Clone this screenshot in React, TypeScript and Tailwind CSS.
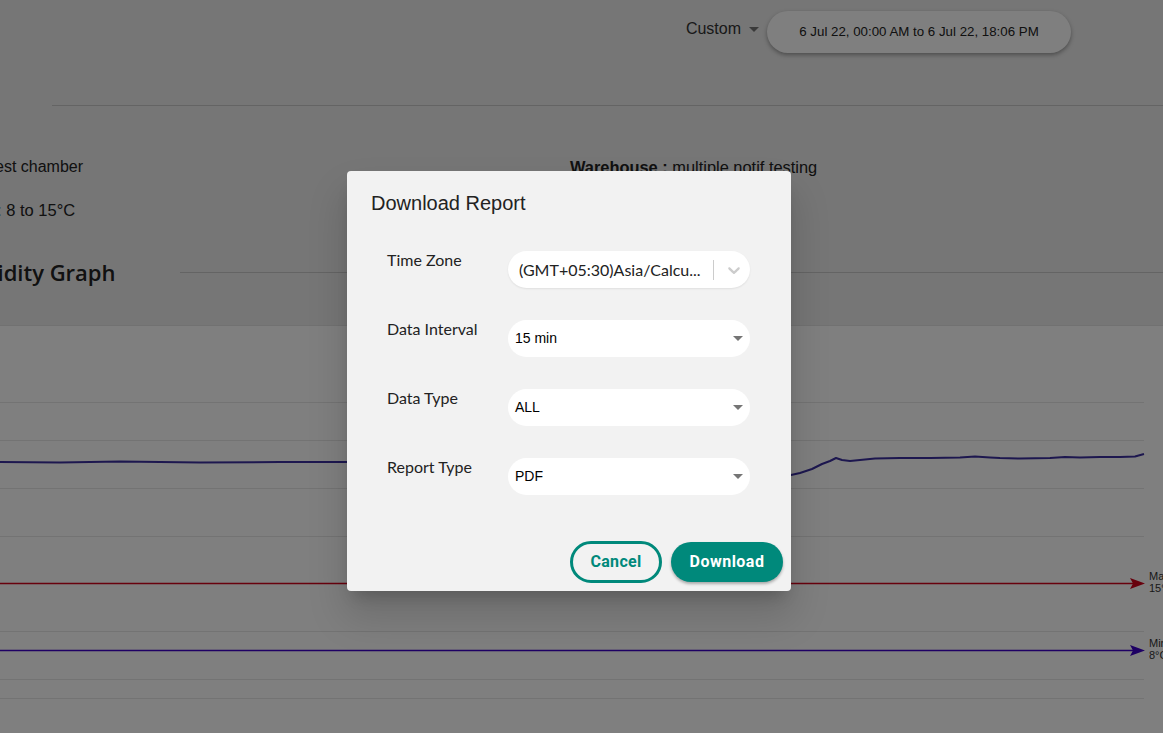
import React from 'react'

const teal = '#00897b'

// data line points across the chart (x, y) relative to chart top
const linePoints =
  '0,136 60,136.5 120,135.5 200,136.5 280,136 346,136 ' +
  '791,149 800,147 812,143 822,138 830,135 836,132 842,134 850,135 860,134 875,132.5 900,132 930,132 960,131.5 975,130.5 990,131.5 1000,132 1020,132.5 1050,132 1065,131 1080,131.5 1100,131 1120,131 1135,130.5 1144,128'

const Chart: React.FC = () => (
  <svg width="1163" height="408" viewBox="0 0 1163 408" className="block">
    {[76, 114, 162, 210, 305, 353, 372].map((y) => (
      <line key={y} x1="0" x2="1144" y1={y + 0.5} y2={y + 0.5} stroke="#e6e6e6" strokeWidth="1" />
    ))}
    <polyline points={linePoints} fill="none" stroke="#3a2f9e" strokeWidth="2" strokeLinejoin="round" />
    {/* max line */}
    <line x1="0" x2="1136" y1="257.5" y2="257.5" stroke="#d0021b" strokeWidth="1.5" />
    <path d="M1130 252 L1145 257.5 L1130 263 L1133 257.5 Z" fill="#d0021b" />
    <text x="1149" y="254" fontSize="11" fill="#333" fontFamily="Liberation Sans, sans-serif">Max</text>
    <text x="1149" y="266" fontSize="11" fill="#333" fontFamily="Liberation Sans, sans-serif">15°C</text>
    {/* min line */}
    <line x1="0" x2="1136" y1="324.5" y2="324.5" stroke="#3c00c8" strokeWidth="1.5" />
    <path d="M1130 319 L1145 324.5 L1130 330 L1133 324.5 Z" fill="#3c00c8" />
    <text x="1149" y="321" fontSize="11" fill="#333" fontFamily="Liberation Sans, sans-serif">Min</text>
    <text x="1149" y="333" fontSize="11" fill="#333" fontFamily="Liberation Sans, sans-serif">8°C</text>
  </svg>
)

const Caret: React.FC = () => (
  <svg width="10" height="5" viewBox="0 0 10 5" className="shrink-0">
    <path d="M0 0 L10 0 L5 5 Z" fill="#757575" />
  </svg>
)

const SimpleSelect: React.FC<{ value: string }> = ({ value }) => (
  <div className="w-[242px] h-[37px] bg-white rounded-full flex items-center justify-between pl-[7px] pr-[7px] font-['Liberation_Sans',Arial,sans-serif] text-[14px] text-black">
    <span>{value}</span>
    <Caret />
  </div>
)

const Row: React.FC<{ label: string; children: React.ReactNode }> = ({ label, children }) => (
  <div className="flex items-start h-[37px]">
    <div className="w-[121px] text-[16px] text-[#222] leading-[18px]">{label}</div>
    {children}
  </div>
)

export default function App() {
  return (
    <div className="relative w-[1163px] h-[733px] overflow-hidden bg-[#ececec] font-['Liberation_Sans',Arial,sans-serif]">
      {/* page */}
      <div className="flex justify-end items-center gap-[8px] pt-[11px] pr-[92px]">
        <div className="flex items-center gap-[8px] text-[16px] text-[#333] -mt-[6px]">
          <span>Custom</span>
          <Caret />
        </div>
        <div className="w-[304px] h-[42px] rounded-full bg-white shadow-[0_2px_4px_rgba(0,0,0,0.35)] flex items-center justify-center text-[13.3px] text-[#222]">
          6 Jul 22, 00:00 AM to 6 Jul 22, 18:06 PM
        </div>
      </div>
      <div className="ml-[52px] mt-[52px] h-px bg-[#c8c8c8]" />
      <div className="flex mt-[49px] text-[16px] leading-[24px] text-[#222]">
        <div className="w-[583px] -ml-[13px]">Test chamber</div>
        <div className="text-[16.4px]">
          <span className="font-bold">Warehouse :</span> multiple notif testing
        </div>
      </div>
      <div className="mt-[19px] -ml-[3px] text-[16.5px] leading-[24px] text-[#222]">: 8 to 15°C</div>
      <div className="flex items-center mt-[36px] h-[28px]">
        <div className="-ml-[54px] w-[234px] text-[22px] leading-[28px] font-['Open_Sans',sans-serif] font-semibold text-[#222]">
          Humidity Graph
        </div>
        <div className="flex-1 h-px bg-[#c8c8c8]" />
      </div>
      <div className="mt-[39px] bg-white border-t border-[#e2e2e2]">
        <Chart />
      </div>

      {/* overlay */}
      <div className="absolute inset-0 bg-black/50" />

      {/* dialog */}
      <div className="absolute left-[347px] top-[171px] w-[444px] h-[420px] bg-[#f2f2f2] rounded-[4px] shadow-[0_11px_15px_-7px_rgba(0,0,0,0.2),0_24px_38px_3px_rgba(0,0,0,0.14)] flex flex-col">
        <h2 className="pl-[24px] pt-[20px] text-[20px] leading-[24px] text-[#222]">Download Report</h2>
        <div className="flex flex-col gap-[32px] pl-[40px] mt-[36px] font-['Lato',sans-serif]">
          <Row label="Time Zone">
            <div className="w-[242px] h-[37px] bg-white rounded-full flex items-center pl-[11px] pr-[6px] shadow-[0_1px_2px_rgba(0,0,0,0.08)]">
              <span className="flex-1 text-[16px] text-[#222] whitespace-nowrap overflow-hidden">(GMT+05:30)Asia/Calcu...</span>
              <span className="w-px h-[20px] bg-[#cccccc]" />
              <svg width="20" height="20" viewBox="0 0 20 20" className="ml-[10px]">
                <path
                  d="M4.516 7.548c0.436-0.446 1.043-0.481 1.576 0l3.908 3.747 3.908-3.747c0.533-0.481 1.141-0.446 1.574 0 0.436 0.445 0.408 1.197 0 1.615-0.406 0.418-4.695 4.502-4.695 4.502-0.217 0.223-0.502 0.335-0.787 0.335s-0.57-0.112-0.789-0.335c0 0-4.287-4.084-4.695-4.502s-0.436-1.17 0-1.615z"
                  fill="#cccccc"
                />
              </svg>
            </div>
          </Row>
          <Row label="Data Interval">
            <SimpleSelect value="15 min" />
          </Row>
          <Row label="Data Type">
            <SimpleSelect value="ALL" />
          </Row>
          <Row label="Report Type">
            <SimpleSelect value="PDF" />
          </Row>
        </div>
        <div className="flex justify-end gap-[9px] pr-[8px] mt-auto mb-[8px] font-['Roboto',sans-serif]">
          <button className="w-[92px] h-[42px] rounded-full border-[3px] border-[#00897b] text-[#00897b] font-bold text-[16px] tracking-[0.02em]">
            Cancel
          </button>
          <button
            className="w-[112px] h-[40px] mt-[1px] rounded-full bg-[#00897b] text-white font-bold text-[16px] tracking-[0.03em] shadow-[0_2px_3px_rgba(0,0,0,0.3)]"
            style={{ backgroundColor: teal }}
          >
            Download
          </button>
        </div>
      </div>
    </div>
  )
}
